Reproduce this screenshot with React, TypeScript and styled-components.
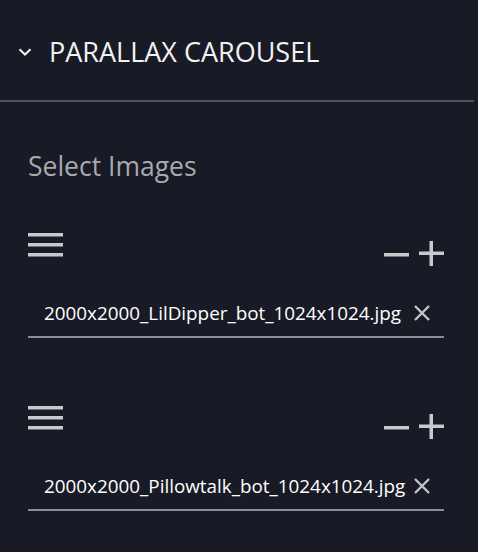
import React from "react"
import styled, { createGlobalStyle } from "styled-components"

const GlobalStyle = createGlobalStyle`
    html, body {
        margin: 0;
        padding: 0;
        background: #181a25;
    }
    body {
        font-family: "Open Sans", "Noto Sans", sans-serif;
        width: 478px;
        height: 552px;
        overflow: hidden;
    }
`

const Panel = styled.div`
    display: flex;
    flex-direction: column;
    width: 478px;
    min-height: 552px;
    background: #181a25;
`

const Header = styled.div`
    display: flex;
    align-items: center;
    height: 102px;
    padding: 2px 0 0 18px;
    box-sizing: border-box;
    border-bottom: 2px solid #50525e;
    margin-right: 4px;
`

const Chevron = styled.svg`
    width: 14px;
    height: 8px;
    margin-top: 2px;
`

const Title = styled.h2`
    margin: 0 0 0 17px;
    font-size: 27px;
    font-weight: 400;
    color: #f2f2f2;
    line-height: 1;
`

const Body = styled.div`
    display: flex;
    flex-direction: column;
    padding: 48px 34px 0 28px;
`

const Label = styled.div`
    font-size: 26.5px;
    color: #a8a9ae;
    line-height: 32px;
    margin-bottom: 51px;
`

const ImageItem = styled.div`
    display: flex;
    flex-direction: column;
    margin-bottom: 68px;
`

const Controls = styled.div`
    display: flex;
    justify-content: space-between;
    align-items: flex-start;
    height: 34px;
`

const StepButtons = styled.div`
    display: flex;
    align-items: center;
    gap: 10px;
    margin-top: 8px;
`

const IconSvg = styled.svg`
    display: block;
    flex-shrink: 0;
`

const FileField = styled.div`
    display: flex;
    align-items: center;
    justify-content: space-between;
    height: 46px;
    padding: 0 14px 0 16px;
    margin-top: 23px;
    border-bottom: 2px solid #8b8d98;
`

const FileName = styled.span`
    font-size: 18.85px;
    color: #ffffff;
    white-space: nowrap;
`

const Hamburger = () => (
    <IconSvg width="35" height="24" viewBox="0 0 35 24">
        <rect x="0" y="0" width="35" height="3.5" fill="#c9c9cb" />
        <rect x="0" y="10" width="35" height="3.5" fill="#c9c9cb" />
        <rect x="0" y="20" width="35" height="3.5" fill="#c9c9cb" />
    </IconSvg>
)

const Minus = () => (
    <IconSvg width="25" height="25" viewBox="0 0 25 25">
        <rect x="0" y="12" width="25" height="3.5" fill="#c9c9cb" />
    </IconSvg>
)

const Plus = () => (
    <IconSvg width="25" height="25" viewBox="0 0 25 25">
        <rect x="0" y="10.5" width="25" height="3.5" fill="#c9c9cb" />
        <rect x="10.5" y="0" width="3.5" height="25" fill="#c9c9cb" />
    </IconSvg>
)

const Close = () => (
    <IconSvg width="16" height="16" viewBox="0 0 16 16">
        <path d="M1 1L15 15M15 1L1 15" stroke="#c4c4c8" strokeWidth="2.4" />
    </IconSvg>
)

const images = [
    { id: 1, name: "2000x2000_LilDipper_bot_1024x1024.jpg" },
    { id: 2, name: "2000x2000_Pillowtalk_bot_1024x1024.jpg" },
]

export default function App() {
    return (
        <>
            <GlobalStyle />
            <Panel>
                <Header>
                    <Chevron viewBox="0 0 14 8">
                        <path
                            d="M1.5 1.2L7 6.5L12.5 1.2"
                            fill="none"
                            stroke="#f2f2f2"
                            strokeWidth="2"
                        />
                    </Chevron>
                    <Title>PARALLAX CAROUSEL</Title>
                </Header>
                <Body>
                    <Label>Select Images</Label>
                    {images.map((item) => (
                        <ImageItem key={item.id}>
                            <Controls>
                                <Hamburger />
                                <StepButtons>
                                    <Minus />
                                    <Plus />
                                </StepButtons>
                            </Controls>
                            <FileField>
                                <FileName>{item.name}</FileName>
                                <Close />
                            </FileField>
                        </ImageItem>
                    ))}
                </Body>
            </Panel>
        </>
    )
}
